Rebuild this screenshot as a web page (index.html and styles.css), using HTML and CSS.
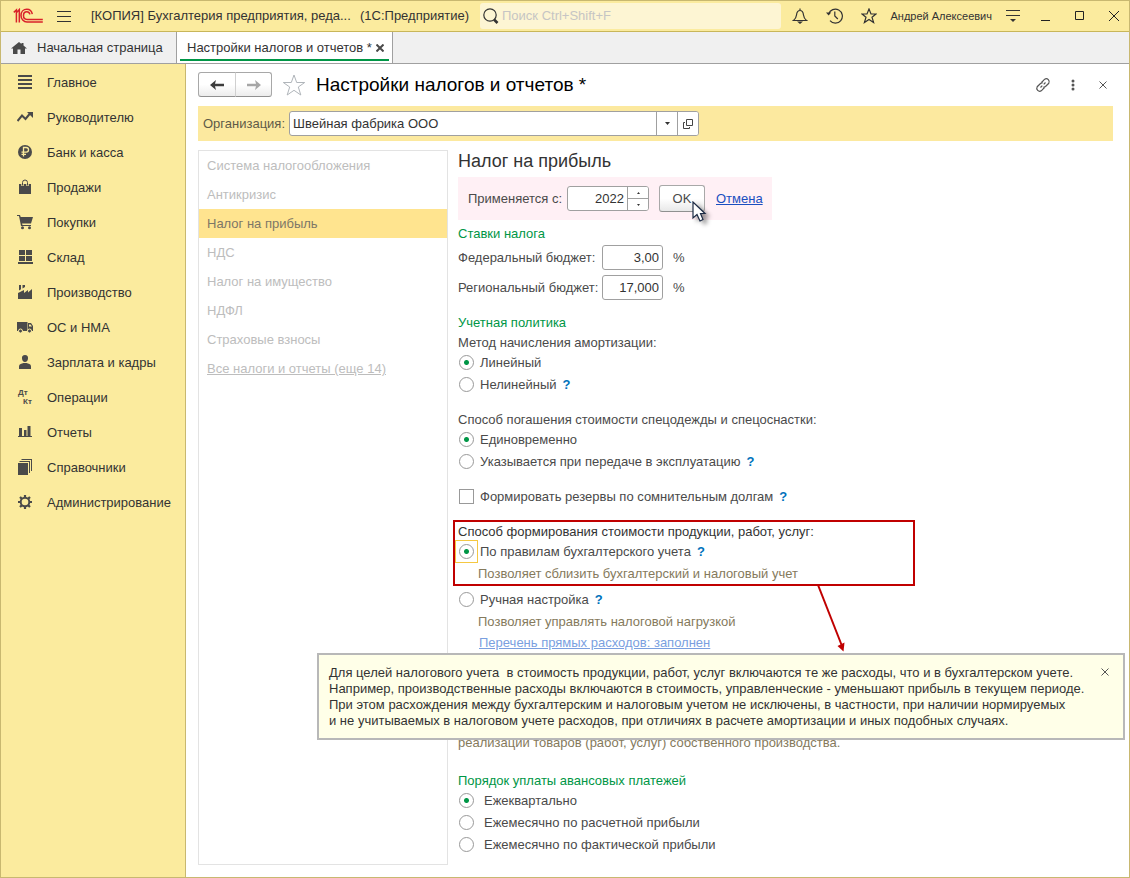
FILE: index.html
```html
<!DOCTYPE html>
<html lang="ru">
<head>
<meta charset="utf-8">
<meta name="viewport" content="width=device-width, initial-scale=1">
<title>Настройки налогов и отчетов</title>
<link rel="stylesheet" href="styles.css">
</head>
<body>
<div class="window">
  <header class="titlebar">
    <svg class="logo" width="30" height="16" viewBox="0 0 30 16" fill="none" stroke="#d9222a" stroke-width="1.5"><path d="M.8 4.400 3.400 2V14.500M3.400 4.800 6.300 1.600V14.500M19.300 6.200C18.800 3.200 16.500 1.200 13.800 1.200c-3.400 0-5.800 2.700-5.800 6.200s2.600 6.600 6 6.600H29.800M16.900 6.400C16.500 4.700 15.400 3.800 13.800 3.800c-2 0-3.300 1.500-3.300 3.700s1.500 3.900 3.600 3.900H29.800"/></svg>
    <button class="icon-btn burger" aria-label="Меню"><svg width="14" height="13" stroke="#333" stroke-width="1"><path d="M0 1.500h14M0 6.500h14M0 11.500h14"/></svg></button>
    <div class="caption"><span>[КОПИЯ] Бухгалтерия предприятия, реда...</span><span>(1С:Предприятие)</span></div>
    <label class="search">
      <svg width="16" height="16" viewBox="0 0 16 16" fill="none" stroke="#333" stroke-width="1.200"><circle cx="7" cy="7" r="6.200"/><path d="m11 11.500 3.500 3.500" stroke-width="2.600"/></svg>
      <input type="text" aria-label="Поиск" placeholder="Поиск Ctrl+Shift+F">
    </label>
    <div class="tools">
      <button class="icon-btn" aria-label="Уведомления"><svg width="16" height="16" viewBox="0 0 16 16" fill="none" stroke="#333" stroke-width="1.200"><path d="M8 .5v2M1.500 12.500h13c-2.500-1.800-2.700-3-3-5.500C11.200 4.200 10 2.500 8 2.500S4.800 4.200 4.500 7c-.3 2.500-.5 3.700-3 5.500z"/><path d="M5 13.500h6L8 16z" fill="#333" stroke="none"/></svg></button>
      <button class="icon-btn" aria-label="История"><svg width="17" height="16" viewBox="0 0 17 16" fill="none" stroke="#333" stroke-width="1.200"><path d="M2.700 6A7 7 0 1 1 4 12.600M8.800 3.500V8l3 3"/><path d="M0 4.500h5.200L2.600 7.500z" fill="#333" stroke="none"/></svg></button>
      <button class="icon-btn" aria-label="Избранное"><svg width="16" height="16" viewBox="0 0 16 16" fill="none" stroke="#333" stroke-width="1.200"><path d="m8 1 2 5h5l-4 3.300 1.600 5.200L8 11.500l-4.600 3L5 9.300 1 6h5z"/></svg></button>
      <span class="user">Андрей Алексеевич</span>
      <button class="icon-btn" aria-label="Сервис"><svg width="14" height="14" stroke="#333"><path d="M0 1.500h14M0 6.500h14"/><path d="M4 10h6l-3 3z" fill="#333" stroke="none"/></svg></button>
      <button class="icon-btn win" aria-label="Свернуть"><svg width="10" height="10" stroke="#222"><path d="M0 9.500h9"/></svg></button>
      <button class="icon-btn win" aria-label="Развернуть"><svg width="10" height="10" fill="none" stroke="#222"><path d="M.5.500h8v8h-8z"/></svg></button>
      <button class="icon-btn win" aria-label="Закрыть"><svg width="10" height="10" stroke="#222"><path d="m0 0 10 10M10 0 0 10"/></svg></button>
    </div>
  </header>

  <nav class="tabs">
    <a class="tab home" href="#"><svg width="16" height="14" viewBox="0 0 16 14" fill="#4a4a4a"><path d="M8 1 0 7.500h2V13h4.500V8.500h3V13H14V7.500h2L12.500 4.600V2h-2v1z"/></svg>Начальная страница</a>
    <div class="tab active"><span>Настройки налогов и отчетов *</span><button class="icon-btn" aria-label="Закрыть вкладку"><svg width="8" height="8" stroke="#4a4a4a" stroke-width="2"><path d="m.5.500 7 7M7.500.500l-7 7"/></svg></button></div>
  </nav>

  <div class="body">
    <nav class="sidebar">
      <a href="#"><svg viewBox="0 0 16 16"><path d="M1 1h14v2H1zM1 5h14v2H1zM1 9h14v2H1zM1 13h14v2H1z"/></svg>Главное</a>
      <a href="#"><svg viewBox="0 0 16 16"><path d="m.5 12 4.500-5.500L8.500 10 13 4.500" fill="none" stroke="#4a4a4a" stroke-width="2"/><path d="M10 3h6v6z"/></svg>Руководителю</a>
      <a href="#"><svg viewBox="0 0 16 16"><circle cx="8" cy="8" r="7"/><path d="M6.500 12.500v-9h2.700a2.300 2.300 0 0 1 0 4.700H4.500M4.500 10.300H9" fill="none" stroke="#fbeb9e" stroke-width="1.300"/></svg>Банк и касса</a>
      <a href="#"><svg viewBox="0 0 16 16"><path d="M2 5h12v10H2z"/><path d="M5.500 7V3.500Q5.500 1 8 1t2.500 2.500V7" fill="none" stroke="#fbeb9e" stroke-width="2.400"/><path d="M5.500 6.500v-3Q5.500 1 8 1t2.500 2.500v3" fill="none" stroke="#4a4a4a"/></svg>Продажи</a>
      <a href="#"><svg viewBox="0 0 16 16"><path d="M0 1h3l.7 2H16l-2 6.500H5L5.500 11H14v1H4L2 2H0z"/><circle cx="5.500" cy="13.700" r="1.500"/><circle cx="12.500" cy="13.700" r="1.500"/></svg>Покупки</a>
      <a href="#"><svg viewBox="0 0 16 16"><path d="M2 1h6v5H2zM9 1h6v5H9zM2 7h6v5H2zM9 7h6v5H9zM1 13h15v2H1z"/></svg>Склад</a>
      <a href="#"><svg viewBox="0 0 16 16"><path d="M1 15V9l6-3v3l4-3v2.500L15 5v10zM2 6.500V1h2v4.300zM5.500 4.500V1H8v2z"/></svg>Производство</a>
      <a href="#"><svg viewBox="0 0 16 16"><path d="M0 3h10.500v9H0zM11 4h3l2 3v5h-5z"/><path d="M12 5.500h1.500L15 7.500h-3z" fill="#fbeb9e"/><circle cx="3.500" cy="12" r="2" stroke="#fbeb9e"/><circle cx="12.500" cy="12" r="2" stroke="#fbeb9e"/></svg>ОС и НМА</a>
      <a href="#"><svg viewBox="0 0 16 16"><path d="M8 1c2.200 0 3.300 1.500 3 3.500C10.800 6.500 9.800 8 8 8S5.200 6.500 5 4.500C4.700 2.500 5.800 1 8 1zM2 15v-2.500Q2 10 5 9.500l1.500-.5h3l1.500.5q3 .5 3 3V15z"/></svg>Зарплата и кадры</a>
      <a href="#"><svg viewBox="0 0 16 16" class="dtkt"><text x="1" y="6">Дт</text><text x="6" y="15">Кт</text></svg>Операции</a>
      <a href="#"><svg viewBox="0 0 16 16"><path d="M2 4h3v8H2zM7 6h2.500v6H7zM10.500 2h3v10h-3zM1 12h14v1H1z"/></svg>Отчеты</a>
      <a href="#"><svg viewBox="0 0 16 16"><path d="M1 4h10v12H1zM2.500 2H13v12h-1V3H2.500zM4.500 0H15v12h-1V1H4.500z"/></svg>Справочники</a>
      <a href="#"><svg viewBox="0 0 16 16" fill="none" stroke="#4a4a4a"><circle cx="8" cy="8" r="4.300" fill="none" stroke-width="2"/><path d="M8 1v2.500M8 12.500V15M1 8h2.500M12.500 8H15M3 3l1.900 1.900M11.100 11.100 13 13M13 3l-1.900 1.900M4.900 11.100 3 13" stroke-width="2.200"/></svg>Администрирование</a>
    </nav>

    <main class="page">
      <div class="page-head">
        <div class="history">
          <button aria-label="Назад"><svg width="14" height="10" viewBox="0 0 14 10" fill="#3c3c3c"><path d="M0 5 6 0 5 3.800h9v2.400H5L6 10z"/></svg></button>
          <button aria-label="Вперед"><svg width="14" height="10" viewBox="0 0 14 10" fill="#a6a6a6"><path d="M14 5 8 0l1 3.800H0v2.400h9L8 10z"/></svg></button>
        </div>
        <button class="icon-btn" aria-label="В избранное"><svg width="24" height="22" viewBox="0 0 24 22" fill="none" stroke="#b0b5ba"><path d="m12 1 2.700 7.500h8L16.300 13l2.500 8L12 16.300 5.200 21l2.500-8L1.300 8.500h8z"/></svg></button>
        <h1>Настройки налогов и отчетов *</h1>
        <div class="page-tools">
          <button class="icon-btn" aria-label="Ссылка"><svg width="16" height="16" viewBox="0 0 16 16" fill="none" stroke="#555" stroke-width="1.200"><path d="M6.500 5.500 9.700 2.200a3 3 0 0 1 4.100 4.100l-3.300 3.200q-1 .8-2.200.5M9.500 10.500l-3.200 3.300a3 3 0 0 1-4.100-4.100l3.300-3.200q1-.8 2.200-.5M5.500 10.500l1.800-1.800M8.700 7.300l1.800-1.800"/></svg></button>
          <button class="icon-btn" aria-label="Еще"><svg width="4" height="12" fill="#555"><circle cx="2" cy="2" r="1.500"/><circle cx="2" cy="6" r="1.500"/><circle cx="2" cy="10" r="1.500"/></svg></button>
          <button class="icon-btn win" aria-label="Закрыть"><svg width="8" height="8" stroke="#555"><path d="m.5.500 7 7M7.500.500l-7 7"/></svg></button>
        </div>
      </div>

      <div class="org">
        <label for="org">Организация:</label>
        <div class="combo">
          <input id="org" type="text" value="Швейная фабрика ООО">
          <button aria-label="Выбрать"><svg width="5" height="3" fill="#333"><path d="M0 0h5L2.500 3z"/></svg></button>
          <button aria-label="Открыть"><svg width="10" height="10" fill="none" stroke="#444"><path d="M3.500.500h6v6h-6zM2 3.500H.5v6h6V8"/></svg></button>
        </div>
      </div>

      <div class="columns">
        <nav class="taxes">
          <a href="#">Система налогообложения</a>
          <a href="#">Антикризис</a>
          <a href="#" class="selected">Налог на прибыль</a>
          <a href="#">НДС</a>
          <a href="#">Налог на имущество</a>
          <a href="#">НДФЛ</a>
          <a href="#">Страховые взносы</a>
          <a href="#" class="all">Все налоги и отчеты (еще 14)</a>
        </nav>

        <form class="form">
          <h2>Налог на прибыль</h2>
          <div class="applies">
            <label for="year">Применяется с:</label>
            <div class="spin">
              <input id="year" type="text" value="2022">
              <div class="steps">
                <button type="button" aria-label="Больше"><svg width="3" height="2" fill="#333"><path d="M0 2h3L1.500 0z"/></svg></button>
                <button type="button" aria-label="Меньше"><svg width="3" height="2" fill="#333"><path d="M0 0h3L1.500 2z"/></svg></button>
              </div>
            </div>
            <div class="ok-wrap">
              <button type="button" class="ok">OK</button>
              <svg class="cursor" width="20" height="26" viewBox="0 0 20 26"><path d="M1 1v16l4-3.500L8 20l3-1.500L8.500 12.500H13z" fill="#fff" stroke="#1c2a44" stroke-width="1.200"/></svg>
            </div>
            <a href="#" class="cancel">Отмена</a>
          </div>

          <h3 class="first">Ставки налога</h3>
          <div class="rates">
            <label for="fed">Федеральный бюджет:</label><input id="fed" type="text" value="3,00"><span>%</span>
            <label for="reg">Региональный бюджет:</label><input id="reg" type="text" value="17,000"><span>%</span>
          </div>

          <h3>Учетная политика</h3>
          <fieldset>
            <legend>Метод начисления амортизации:</legend>
            <div class="opt"><label><input type="radio" name="amort" checked>Линейный</label></div>
            <div class="opt"><label><input type="radio" name="amort">Нелинейный</label><button type="button" class="help">?</button></div>
          </fieldset>
          <fieldset class="spaced">
            <legend>Способ погашения стоимости спецодежды и спецоснастки:</legend>
            <div class="opt"><label><input type="radio" name="wear" checked>Единовременно</label></div>
            <div class="opt"><label><input type="radio" name="wear">Указывается при передаче в эксплуатацию</label><button type="button" class="help">?</button></div>
          </fieldset>
          <div class="opt spaced"><label><input type="checkbox">Формировать резервы по сомнительным долгам</label><button type="button" class="help">?</button></div>
          <fieldset class="spaced">
            <div class="marked">
              <legend>Способ формирования стоимости продукции, работ, услуг:</legend>
              <div class="opt"><label><span class="focus-frame"><input type="radio" name="cost" checked></span>По правилам бухгалтерского учета</label><button type="button" class="help">?</button></div>
              <p class="hint">Позволяет сблизить бухгалтерский и налоговый учет</p>
              <svg class="arrow" width="32" height="68" viewBox="0 0 32 68"><path d="M1 0 25 61" stroke="#c00000" stroke-width="2"/><path d="m20.500 61 6 5.500 1-9z" fill="#c00000"/></svg>
            </div>
            <div class="opt"><label><input type="radio" name="cost">Ручная настройка</label><button type="button" class="help">?</button></div>
            <p class="hint">Позволяет управлять налоговой нагрузкой</p>
            <a href="#" class="costs">Перечень прямых расходов: заполнен</a>
          </fieldset>
          <p class="note">реализации товаров (работ, услуг) собственного производства.</p>

          <h3>Порядок уплаты авансовых платежей</h3>
          <div class="advance">
            <div class="opt"><label><input type="radio" name="advance" checked>Ежеквартально</label></div>
            <div class="opt"><label><input type="radio" name="advance">Ежемесячно по расчетной прибыли</label></div>
            <div class="opt"><label><input type="radio" name="advance">Ежемесячно по фактической прибыли</label></div>
          </div>
        </form>
      </div>
    </main>
  </div>

  <aside class="tooltip">
    <p>Для целей налогового учета&nbsp; в стоимость продукции, работ, услуг включаются те же расходы, что и в бухгалтерском учете.<br>Например, производственные расходы включаются в стоимость, управленческие - уменьшают прибыль в текущем периоде.<br>При этом расхождения между бухгалтерским и налоговым учетом не исключены, в частности, при наличии нормируемых<br>и не учитываемых в налоговом учете расходов, при отличиях в расчете амортизации и иных подобных случаях.</p>
    <button class="icon-btn" aria-label="Закрыть подсказку"><svg width="8" height="8" stroke="#555"><path d="m.5.500 7 7M7.500.500l-7 7"/></svg></button>
  </aside>
</div>
</body>
</html>
```

FILE: styles.css
```css
*, *::before, *::after { box-sizing: border-box; }

body {
  margin: 0;
  background: #fff;
  color: #4a4a4a;
  font: 13px/20px "Liberation Sans", Arial, sans-serif;
}

button, input { font: inherit; color: inherit; margin: 0; }
h1, h2, h3, p { margin: 0; font-weight: 400; }
svg { display: block; flex: none; }
label, legend, a, span, p { white-space: nowrap; }

.window {
  position: relative;
  display: flex;
  flex-direction: column;
  min-height: 100vh;
  border: 1px solid #c8b870;
}

.icon-btn {
  display: flex;
  align-items: center;
  justify-content: center;
  padding: 0;
  border: 0;
  background: none;
}

/* Title bar */
.titlebar {
  display: flex;
  align-items: center;
  height: 31px;
  padding-left: 12px;
  background: #fbeb9e;
  border-bottom: 1px solid #c8b65a;
  color: #333;
}
.burger { margin-left: 14px; }
.caption {
  display: flex;
  justify-content: space-between;
  width: 378px;
  margin-left: 20px;
}
.search {
  display: flex;
  align-items: center;
  gap: 3px;
  flex: 1;
  height: 26px;
  margin-left: 11px;
  padding-left: 3px;
  border-radius: 3px;
  background: #fdf5d3;
}
.search input {
  flex: 1;
  min-width: 0;
  padding: 0;
  border: 0;
  outline: 0;
  background: none;
}
.search input::placeholder { color: #c6c5c4; opacity: 1; }
.tools {
  display: flex;
  align-items: center;
  gap: 18px;
  padding: 0 7px 0 11px;
}
.user { margin: 0 -4px 0 -5px; font-size: 11px; }
.win { width: 16px; }

/* Tabs */
.tabs {
  display: flex;
  height: 32px;
  background: #f0f0f0;
  border-bottom: 1px solid #a0a0a0;
  color: #333;
}
.tab {
  position: relative;
  display: flex;
  align-items: center;
  color: inherit;
  text-decoration: none;
  border-right: 1px solid #a0a0a0;
}
.home { width: 176px; gap: 10px; padding-left: 10px; }
.active {
  width: 216px;
  justify-content: space-between;
  padding: 0 8px 0 10px;
  background: #fff;
}
.active::after {
  content: "";
  position: absolute;
  right: 3px;
  bottom: 2px;
  left: 3px;
  height: 2px;
  background: #009646;
}

.body { display: flex; flex: 1; }

/* Sections panel */
.sidebar {
  width: 185px;
  flex: none;
  padding-top: 1px;
  background: #fbeb9e;
  border-right: 1px solid #c8b870;
}
.sidebar a {
  display: flex;
  align-items: center;
  gap: 14px;
  height: 35px;
  padding-left: 16px;
  color: #333;
  text-decoration: none;
}
.sidebar svg { width: 16px; height: 16px; margin-bottom: 1px; fill: #4a4a4a; }
.dtkt { font: bold 8px "Liberation Sans", Arial, sans-serif; }

/* Page */
.page {
  flex: 1;
  min-width: 0;
  padding: 8px 16px 12px 12px;
}
.page-head {
  display: flex;
  align-items: center;
  gap: 10px;
  height: 25px;
}
.page-head h1 { color: #000; font-size: 19px; white-space: nowrap; }
.history { display: flex; }
.history button {
  display: flex;
  align-items: center;
  justify-content: center;
  width: 38px;
  height: 25px;
  padding: 0;
  border: 1px solid #a8a8a8;
  border-bottom-color: #909090;
  border-radius: 3px 0 0 3px;
  background: linear-gradient(#fff 50%, #ececec);
}
.history button + button { width: 37px; margin-left: -1px; border-left-color: #d0d0d0; border-radius: 0 3px 3px 0; }
.page-tools {
  display: flex;
  align-items: center;
  gap: 20px;
  margin-left: auto;
  padding-right: 2px;
}

.org {
  display: flex;
  align-items: center;
  gap: 4px;
  height: 35px;
  margin-top: 9px;
  padding-left: 5px;
  background: #fce99f;
  color: #5f5b48;
}
.combo, .spin {
  display: flex;
  height: 25px;
  border: 1px solid #a0a0a0;
  border-radius: 3px;
  background: #fff;
  overflow: hidden;
}
.combo { width: 410px; }
.combo input, .spin input {
  flex: 1;
  min-width: 0;
  padding: 0 3px;
  border: 0;
  outline: 0;
  background: none;
  color: #333;
}
.combo button {
  display: flex;
  align-items: center;
  justify-content: center;
  width: 21px;
  padding: 0;
  border: 0;
  border-left: 1px solid #a0a0a0;
  background: #fff;
}

.columns { display: flex; gap: 10px; margin-top: 9px; }

.taxes {
  width: 250px;
  flex: none;
  min-height: 715px;
  border: 1px solid #e3e3e3;
}
.taxes a {
  display: block;
  height: 29px;
  padding-left: 8px;
  color: #bdbdbd;
  line-height: 29px;
  text-decoration: none;
}
.taxes .selected { background: #ffe48f; color: #7d7767; }
.taxes .all { text-decoration: underline; }

/* Form */
.form { flex: 1; min-width: 0; }
.form h2 { margin-bottom: 5px; color: #333; font-size: 18px; line-height: 22px; }
.form h3 { margin-top: 12px; padding-top: 2px; color: #009646; font-size: 13px; line-height: 18px; }
.form .first { margin-top: 3px; }

.applies {
  display: flex;
  align-items: center;
  width: 314px;
  height: 43px;
  padding-left: 10px;
  background: #fff0f5;
}
.applies > label { width: 99px; }
.spin { width: 82px; }
.spin input { text-align: right; }
.steps { display: flex; flex-direction: column; width: 21px; border-left: 1px solid #a0a0a0; }
.steps button {
  display: flex;
  flex: 1;
  align-items: center;
  justify-content: center;
  padding: 0;
  border: 0;
  background: #fff;
}
.steps button + button { border-top: 1px solid #a0a0a0; }
.ok-wrap { position: relative; margin: 0 11px 0 10px; }
.ok {
  display: block;
  width: 46px;
  height: 27px;
  padding: 0;
  border: 1px solid #a8a8a8;
  border-bottom-color: #909090;
  border-radius: 3px;
  background: linear-gradient(#fff 50%, #e8e8e8);
}
.cursor {
  position: absolute;
  top: 16px;
  left: 33px;
  filter: drop-shadow(4px 3px 2px #0006);
}
.cancel { color: #1a4fc0; }

.rates {
  display: grid;
  grid-template-columns: 144px 61px auto;
  justify-content: start;
  align-items: center;
  row-gap: 5px;
  margin-top: 2px;
}
.rates input {
  width: 61px;
  height: 25px;
  padding: 0 3px;
  border: 1px solid #a0a0a0;
  border-radius: 3px;
  color: #333;
  text-align: right;
}
.rates span { margin-left: 10px; }

fieldset { margin: 0; padding: 0; border: 0; min-width: 0; }
legend { display: block; padding: 2px 0 0; line-height: 18px; }
.spaced { margin-top: 13px; }

.opt { display: flex; align-items: center; height: 22px; }
.opt label { display: flex; align-items: center; gap: 6px; }
.opt input {
  appearance: none;
  flex: none;
  width: 15px;
  height: 15px;
  margin: 0 0 1px 1px;
  border: 1px solid #999;
  background: #fff;
}
.opt input[type="radio"] { border-radius: 50%; }
.opt input[type="radio"]:checked { background: radial-gradient(circle, #009646 2px, #fff 3px); }
.focus-frame {
  display: flex;
  margin: -4px -4px -3px -3px;
  padding: 3px;
  border: 1px solid #f5c842;
}
.focus-frame input { margin: 0; }
.advance label { gap: 10px; }
.help {
  padding: 0;
  border: 0;
  margin-left: 6px;
  background: none;
  color: #0072bc;
  font-weight: 700;
}

.marked { position: relative; margin-bottom: 4px; }
.marked legend { color: #333; }
.marked::after {
  content: "";
  position: absolute;
  top: -1px;
  bottom: -1px;
  left: -5px;
  width: 462px;
  border: 2px solid #c00000;
  pointer-events: none;
}
.arrow { position: absolute; top: 64px; left: 359px; }

.hint { padding-left: 20px; color: #857a5c; line-height: 22px; }
.costs { display: block; padding-left: 21px; color: #7a9fdf; line-height: 20px; }
.note { margin-top: 79px; color: #857a5c; line-height: 22px; }
.note + h3 { margin-top: 16px; }

.tooltip {
  position: absolute;
  top: 652px;
  right: 4px;
  left: 316px;
  display: flex;
  align-items: flex-start;
  justify-content: space-between;
  padding: 10px 14px 9px 10px;
  border: 2px solid #b8b8b8;
  background: #ffffe8;
  color: #333;
  line-height: 16px;
}
.tooltip .icon-btn { height: 14px; }
```
